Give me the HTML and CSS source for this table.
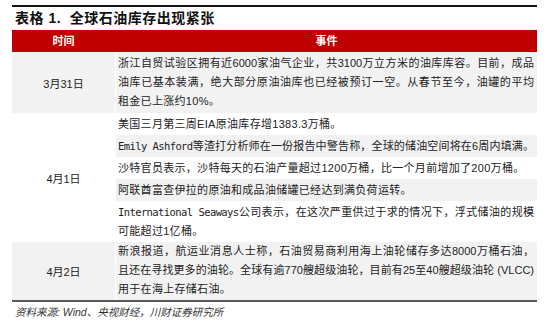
FILE: index.html
```html
<!DOCTYPE html>
<html lang="zh-CN">
<head>
<meta charset="utf-8">
<title>表格 1. 全球石油库存出现紧张</title>
<link rel="stylesheet" href="styles.css">
</head>
<body>
<div class="report">
  <div class="title">表格 1.&nbsp; 全球石油库存出现紧张</div>
  <div class="table">
    <div class="head">
      <div class="hcell">时间</div>
      <div class="hcell">事件</div>
    </div>

    <div class="row shade">
      <div class="date">3月31日</div>
      <div class="events pad">
        <span class="ln full">浙江自贸试验区拥有近6000家油气企业，共3100万立方米的油库库容。目前，成品</span>
        <span class="ln full">油库已基本装满，绝大部分原油油库也已经被预订一空。从春节至今，油罐的平均</span>
        <span class="ln">租金已上涨约10%。</span>
      </div>
    </div>

    <div class="row">
      <div class="date">4月1日</div>
      <div class="events">
        <div class="item"><span class="ln">美国三月第三周EIA原油库存增1383.3万桶。</span></div>
        <div class="item alt"><span class="ln full"><span class="mono">Emily Ashford</span>等渣打分析师在一份报告中警告称，全球的储油空间将在6周内填满。</span></div>
        <div class="item"><span class="ln">沙特官员表示，沙特每天的石油产量超过1200万桶，比一个月前增加了200万桶。</span></div>
        <div class="item alt"><span class="ln">阿联酋富查伊拉的原油和成品油储罐已经达到满负荷运转。</span></div>
        <div class="item">
          <span class="ln full"><span class="mono">International Seaways</span>公司表示，在这次严重供过于求的情况下，浮式储油的规模</span>
          <span class="ln">可能超过1亿桶。</span>
        </div>
      </div>
    </div>

    <div class="row shade">
      <div class="date">4月2日</div>
      <div class="events tight">
        <span class="ln full">新浪报道，航运业消息人士称，石油贸易商利用海上油轮储存多达8000万桶石油，</span>
        <span class="ln full">且还在寻找更多的油轮。全球有逾770艘超级油轮，目前有25至40艘超级油轮 (VLCC)</span>
        <span class="ln">用于在海上存储石油。</span>
      </div>
    </div>
  </div>
  <div class="source">资料来源: Wind、央视财经，川财证券研究所</div>
</div>
</body>
</html>
```

FILE: styles.css
```css
* {
  box-sizing: border-box;
  margin: 0;
  padding: 0;
}

body {
  margin: 0;
  background: #ffffff;
  font-family: "Liberation Sans", "Noto Sans CJK SC", sans-serif;
  color: #222222;
}

.report {
  width: 525px;
  margin: 5px 0 0 12px;
}

.title {
  border-top: 2px solid #111111;
  padding: 1px 0 2px 3px;
  font-size: 14px;
  font-weight: 700;
  line-height: 20px;
  letter-spacing: 0.5px;
  color: #111111;
}

.table {
  border-bottom: 2px solid #595959;
}

.head {
  display: grid;
  grid-template-columns: 103px 1fr;
  column-gap: 1px;
  height: 22px;
  background: #c00000;
}

.hcell {
  color: #ffffff;
  font-size: 11px;
  font-weight: 700;
  line-height: 22px;
  text-align: center;
}

.row {
  display: grid;
  grid-template-columns: 103px 1fr;
  column-gap: 1px;
}

.shade .date,
.shade .events {
  background: #f2f2f2;
}

.date {
  display: flex;
  align-items: center;
  justify-content: center;
  font-size: 11px;
  color: #222222;
}

.events {
  font-size: 11px;
  line-height: 19px;
}

.events.pad {
  padding: 2px 3px 2px 2px;
}

.events.tight {
  padding: 0 3px 1px 2px;
}

.item {
  padding: 1.5px 3px 1.5px 2px;
}

.item.alt {
  background: #f2f2f2;
}

.ln {
  display: block;
  letter-spacing: 0.3px;
}

.ln.full {
  letter-spacing: 0;
  text-align: justify;
  text-align-last: justify;
}

.mono {
  font-family: "DejaVu Sans Mono", "Liberation Mono", monospace;
  font-size: 10.5px;
  letter-spacing: -0.6px;
}

.source {
  margin-top: 2px;
  padding-left: 3px;
  font-size: 10.5px;
  line-height: 16px;
  font-style: italic;
  color: #333333;
}
```
